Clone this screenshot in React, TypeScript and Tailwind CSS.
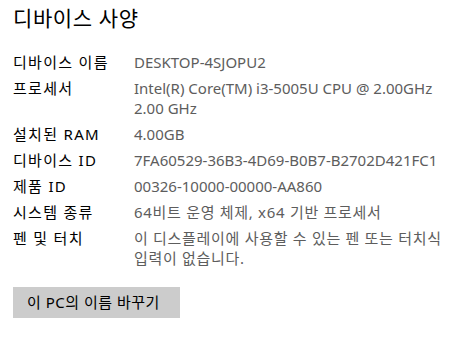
export default function App() {
  const rows: [string, [string, boolean][]][] = [
    ["디바이스 이름", [["DESKTOP-4SJOPU2", false]]],
    ["프로세서", [["Intel(R) Core(TM) i3-5005U CPU @ 2.00GHz", false], ["2.00 GHz", false]]],
    ["설치된 RAM", [["4.00GB", false]]],
    ["디바이스 ID", [["7FA60529-36B3-4D69-B0B7-B2702D421FC1", false]]],
    ["제품 ID", [["00326-10000-00000-AA860", false]]],
    ["시스템 종류", [["64비트 운영 체제, x64 기반 프로세서", true]]],
    ["펜 및 터치", [["이 디스플레이에 사용할 수 있는 펜 또는 터치식", true], ["입력이 없습니다.", true]]],
  ];
  return (
    <div
      className="w-[471px] h-[338px] bg-white pl-[13px] pt-[4px]"
      style={{ fontFamily: '"Noto Sans", "Noto Sans CJK KR", sans-serif' }}
    >
      <h1 className="text-[21px] leading-[28px] text-black font-normal tracking-[0.6px]">디바이스 사양</h1>
      <div className="mt-[20px] flex flex-col gap-[6px]">
        {rows.map(([label, vals]) => (
          <div key={label} className="flex text-[15px] leading-[20px]">
            <div className="w-[121px] shrink-0 text-black tracking-[1.3px]">{label}</div>
            <div className="text-[#5d5d5d] whitespace-nowrap">
              {vals.map(([v, ko]) => (
                <div key={v} className={ko ? "tracking-[0.7px]" : "tracking-normal"}>
                  {v}
                </div>
              ))}
            </div>
          </div>
        ))}
      </div>
      <button className="mt-[19px] w-[167px] h-[31px] bg-[#cccccc] text-black text-[15px] text-left pl-[14px] tracking-[0.5px]">
        이 PC의 이름 바꾸기
      </button>
    </div>
  );
}
